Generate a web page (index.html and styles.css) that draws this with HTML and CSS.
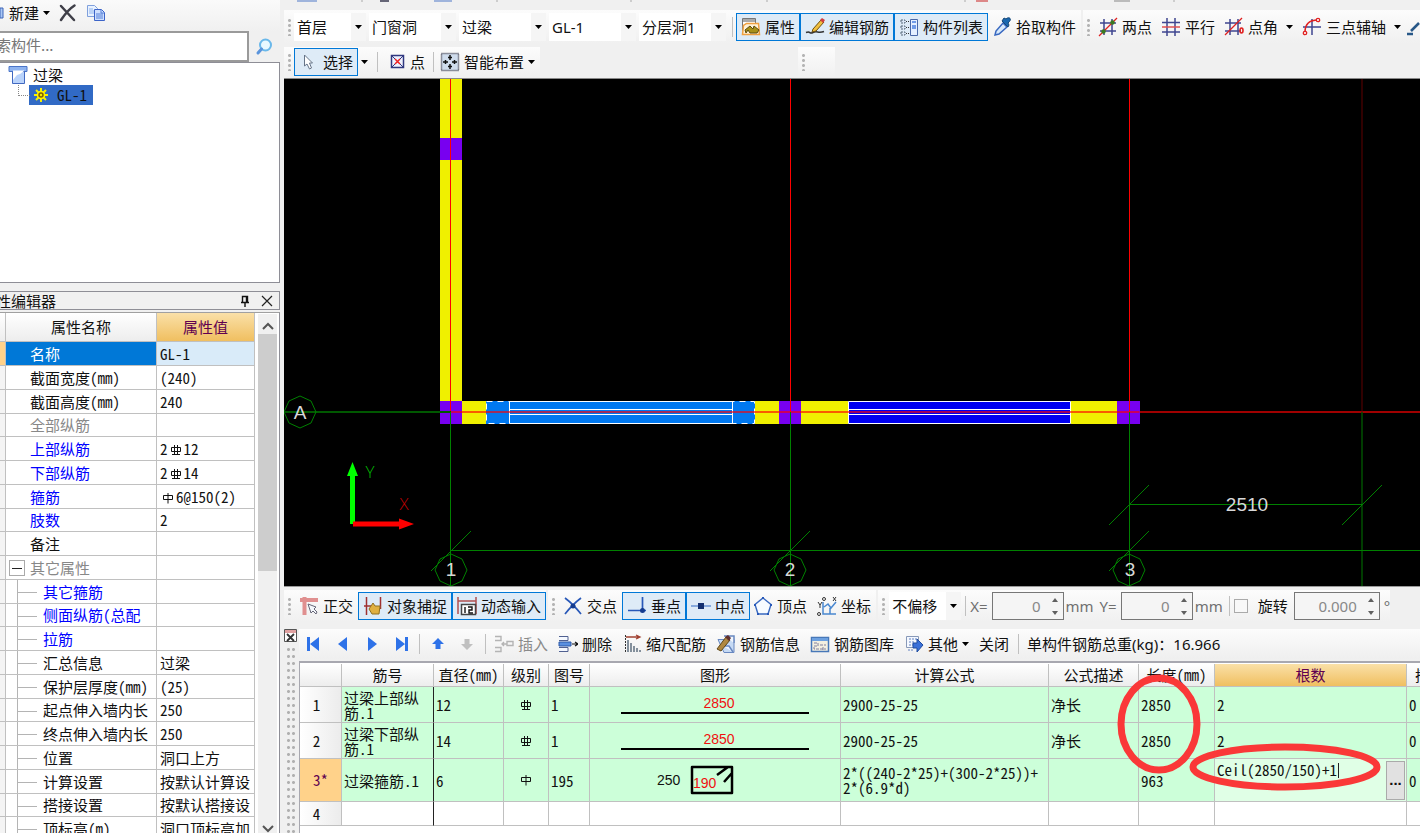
FILE: index.html
```html
<!DOCTYPE html>
<html lang="zh-CN">
<head>
<meta charset="utf-8">
<title>过梁 GL-1</title>
<link rel="stylesheet" href="styles.css">
</head>
<body>
<svg class="defs" aria-hidden="true">
  <symbol id="caret" viewBox="0 0 7 4"><path d="M0 0h7L3.500 4z"/></symbol>
  <symbol id="rebar3" viewBox="0 0 12 12"><path d="M1.500 3.500h9v4h-9zM4.500 1v10M7.500 1v10M2 10.500h8" fill="none" stroke="#111"/></symbol>
  <symbol id="rebar1" viewBox="0 0 12 12"><path d="M1.500 3.500h9v4h-9zM6 1v10.500" fill="none" stroke="#111"/></symbol>
  <symbol id="spin" viewBox="0 0 8 20"><path d="M1 6l3-4 3 4zM1 15l3 4 3-4z" fill="#606060"/></symbol>
</svg>

<aside class="side">
  <div class="side-tools">
    <svg class="frag" viewBox="0 0 4 12"><path d="M0 1h3v10H0z" fill="#a9c7f5" stroke="#3c64b8"/></svg>
    <button class="plain">新建<svg class="caret"><use href="#caret"/></svg></button>
    <button class="plain" aria-label="删除构件"><svg class="ico" viewBox="0 0 20 20"><path d="M3 3l13 14M16.500 2.500C11 6 7 11 3 17" fill="none" stroke="#3f3f48" stroke-width="2.500" stroke-linecap="round"/></svg></button>
    <button class="plain" aria-label="复制"><svg class="ico" viewBox="0 0 20 20"><path d="M1.500 2.500h7l3 3v8h-10z" fill="#e9f2ff" stroke="#7fa0dc"/><path d="M3 6h4M3 8h5M3 10h5" stroke="#8db3ee"/><path d="M8.500 6.500h7l3 3v8h-10z" fill="#cfe0ff" stroke="#3c64c8"/><path d="M15 7v3h3M10 11h7M10 13h7M10 15h7" fill="none" stroke="#5580d8"/></svg></button>
  </div>
  <div class="search">
    <input type="text" value="索构件..." aria-label="搜索构件">
    <button aria-label="搜索"><svg class="ico" viewBox="0 0 20 20"><circle cx="11.500" cy="8" r="5.500" fill="#e8f8ff" stroke="#6ab8ea" stroke-width="2"/><path d="M7.500 12L4 16" stroke="#5a94dc" stroke-width="3" stroke-linecap="round"/></svg></button>
  </div>
  <ul class="tree">
    <li><svg class="ico" viewBox="0 0 20 20"><path d="M1 1.500h18v5H1z" fill="#8fb4f0" stroke="#4a74c8"/><path d="M4.500 6.500h12v12h-12z" fill="#b9d3fb" stroke="#4068c0"/><path d="M5 15l4-5 3-1 4-3v-0.500H5z" fill="#fff"/></svg>过梁
      <ul><li><span class="picked"><svg class="sun" viewBox="0 0 14 14"><g stroke="#f4f000" stroke-width="2"><path d="M7 0v14M0 7h14M2 2l10 10M12 2L2 12"/></g><circle cx="7" cy="7" r="3.500" fill="#806000" stroke="#fff400" stroke-width="1.500"/><circle cx="7" cy="7" r="1.200" fill="#f4f000"/></svg><span class="mono">GL-1</span></span></li></ul>
    </li>
  </ul>
  <div class="title"><h2>性编辑器</h2>
    <button aria-label="固定"><svg viewBox="0 0 14 14"><path d="M3 8.500h8M4.500 8V2.500h5V8M8.500 2v6M7 9v4" fill="none" stroke="#111" stroke-width="1.400"/></svg></button>
    <button aria-label="关闭"><svg viewBox="0 0 14 14"><path d="M2 2l10 10M12 2L2 12" stroke="#222" stroke-width="1.200"/></svg></button>
  </div>
  <div class="props">
    <table>
      <colgroup><col class="p0"><col class="p1"><col class="p2"></colgroup>
      <thead><tr><th></th><th>属性名称</th><th class="hot">属性值</th></tr></thead>
      <tbody>
        <tr class="current"><td></td><td>名称</td><td><span class="mono">GL-1</span></td></tr>
        <tr><td></td><td>截面宽度<span class="mono">(mm)</span></td><td><span class="mono">(240)</span></td></tr>
        <tr><td></td><td>截面高度<span class="mono">(mm)</span></td><td><span class="mono">240</span></td></tr>
        <tr class="dim"><td></td><td>全部纵筋</td><td></td></tr>
        <tr class="link"><td></td><td>上部纵筋</td><td><span class="mono">2<svg class="bar"><use href="#rebar3"/></svg>12</span></td></tr>
        <tr class="link"><td></td><td>下部纵筋</td><td><span class="mono">2<svg class="bar"><use href="#rebar3"/></svg>14</span></td></tr>
        <tr class="link"><td></td><td>箍筋</td><td><span class="mono"><svg class="bar"><use href="#rebar1"/></svg>6@150(2)</span></td></tr>
        <tr class="link"><td></td><td>肢数</td><td><span class="mono">2</span></td></tr>
        <tr><td></td><td>备注</td><td></td></tr>
        <tr class="dim group"><td></td><td><button class="fold" aria-label="折叠"></button>其它属性</td><td></td></tr>
        <tr class="kid link"><td></td><td>其它箍筋</td><td></td></tr>
        <tr class="kid link"><td></td><td>侧面纵筋<span class="mono">(</span>总配</td><td></td></tr>
        <tr class="kid link"><td></td><td>拉筋</td><td></td></tr>
        <tr class="kid"><td></td><td>汇总信息</td><td>过梁</td></tr>
        <tr class="kid"><td></td><td>保护层厚度<span class="mono">(mm)</span></td><td><span class="mono">(25)</span></td></tr>
        <tr class="kid"><td></td><td>起点伸入墙内长</td><td><span class="mono">250</span></td></tr>
        <tr class="kid"><td></td><td>终点伸入墙内长</td><td><span class="mono">250</span></td></tr>
        <tr class="kid"><td></td><td>位置</td><td>洞口上方</td></tr>
        <tr class="kid"><td></td><td>计算设置</td><td>按默认计算设</td></tr>
        <tr class="kid"><td></td><td>搭接设置</td><td>按默认搭接设</td></tr>
        <tr class="kid last"><td></td><td>顶标高<span class="mono">(m)</span></td><td>洞口顶标高加</td></tr>
      </tbody>
    </table>
    <div class="scroll"><svg viewBox="0 0 12 8"><path d="M1 7l5-5 5 5" fill="none" stroke="#555" stroke-width="2"/></svg><i></i><svg viewBox="0 0 12 8"><path d="M1 1l5 5 5-5" fill="none" stroke="#555" stroke-width="2"/></svg></div>
  </div>
</aside>

<main class="work">
  <svg class="sliver" viewBox="0 0 1136 3" preserveAspectRatio="xMinYMin slice"><path d="M13 1h20M150 1h18" stroke="#9fb4dc" stroke-width="2"/><path d="M96 1h9" stroke="#667" stroke-width="2"/><path d="M692 1h12" stroke="#d88" stroke-width="2"/><path d="M78 0v2M213 0v2M347 0v2M483 0v2M681 0v2M890 0v2" stroke="#aaa"/><path d="M830 1h16" stroke="#bbb" stroke-width="2"/></svg>

  <div class="bars bars-top">
    <div class="bar-strip">
      <i class="grip"></i>
      <span class="combo w72"><select aria-label="楼层"><option>首层</option></select><svg class="caret"><use href="#caret"/></svg></span>
      <span class="combo w87"><select aria-label="构件类别"><option>门窗洞</option></select><svg class="caret"><use href="#caret"/></svg></span>
      <span class="combo w87"><select aria-label="构件类型"><option>过梁</option></select><svg class="caret"><use href="#caret"/></svg></span>
      <span class="combo w87"><select aria-label="构件"><option>GL-1</option></select><svg class="caret"><use href="#caret"/></svg></span>
      <span class="combo w87"><select aria-label="分层"><option>分层洞1</option></select><svg class="caret"><use href="#caret"/></svg></span>
      <i class="sep"></i>
      <div class="joined">
        <button class="tool on"><svg class="ico" viewBox="0 0 20 20"><path d="M1.500 1.500h13v12h-13z" fill="#fff" stroke="#777"/><path d="M2 2h12v3H2z" fill="#aaa"/><path d="M5.500 6.500h12l1 11h-17l1-9z" fill="#fff2d8" stroke="#f0a040" stroke-width="1.500"/><path d="M4 13l5-4 3 3 1-3 5 4-2 3H9l-2-3-2 3z" fill="#a89018" stroke="#5c4c10"/></svg>属性</button>
        <button class="tool on"><svg class="ico" viewBox="0 0 20 20"><path d="M1 15.500c5-2 3 2 7 0s5 1 11-1" fill="none" stroke="#333" stroke-width="1.500"/><path d="M8 12l8-9 3 2-8 9-4 1z" fill="#f0c040" stroke="#70500c"/><path d="M15 3l2-2 3 2-2 3z" fill="#d04040"/></svg>编辑钢筋</button>
        <button class="tool on"><svg class="ico" viewBox="0 0 20 20"><path d="M2 3h4v3H2zM2 9h4v3H2zM2 15h4v3H2z" fill="#dce8f8" stroke="#567" stroke-dasharray="2 1"/><path d="M7 4.500h3M7 10.500h3M7 16.500h3" stroke="#333" stroke-dasharray="1 1"/><path d="M11.500 2.500h7v16h-7z" fill="#e4efff" stroke="#4a68a8"/><path d="M13 5h4M13 9h4M13 11h4" stroke="#4a80e0" stroke-width="1.500"/></svg>构件列表</button>
      </div>
      <button class="tool"><svg class="ico" viewBox="0 0 20 20"><path d="M3 18l1-4 7-8 4 4-8 7z" fill="#d7e9fb" stroke="#3868c0" stroke-width="1.500"/><path d="M10 4l6 6 1-2-1-2c5-4 1-7-2-4l-2-1z" fill="#1b68b0" stroke="#164878"/></svg>拾取构件</button>
    </div>
    <div class="bar-strip grow">
      <i class="grip"></i>
      <button class="tool"><svg class="ico" viewBox="0 0 20 20"><path d="M6 2v16M14 2v16M2 6h16M2 14h16" stroke="#3f4690" stroke-width="1.500"/><path d="M1 19L19 1" stroke="#e02020" stroke-width="1.300"/><circle cx="14.500" cy="5.500" r="2.200" fill="#3b7a20"/><circle cx="5.500" cy="14.500" r="2.200" fill="#3b7a20"/></svg>两点</button>
      <button class="tool"><svg class="ico" viewBox="0 0 20 20"><path d="M6 1v18M14 1v18M1 5.500h18M1 15h18" stroke="#3f4690" stroke-width="1.500"/><path d="M1 10h18" stroke="#e05050" stroke-width="1.500"/></svg>平行</button>
      <button class="tool drop"><svg class="ico" viewBox="0 0 20 20"><path d="M6 2v16M14 2v16M1 6h16M1 14h16" stroke="#3f4690" stroke-width="1.500"/><path d="M1 18L18 1" stroke="#e02020" stroke-width="1.300"/><ellipse cx="17.500" cy="13.500" rx="1.500" ry="2.500" fill="none" stroke="#e02020" stroke-width="1.600"/></svg>点角<svg class="caret"><use href="#caret"/></svg></button>
      <button class="tool drop"><svg class="ico" viewBox="0 0 20 20"><path d="M10 2v16M1 10h18" stroke="#3f4690" stroke-width="1.500"/><path d="M3 15Q3 3 16 3" fill="none" stroke="#e02020" stroke-width="1.500"/><circle cx="3" cy="16" r="1.700" fill="#fff" stroke="#e02020" stroke-width="1.300"/><circle cx="16" cy="3" r="1.700" fill="#fff" stroke="#e02020" stroke-width="1.300"/></svg>三点辅轴<svg class="caret"><use href="#caret"/></svg></button>
      <svg class="ico" viewBox="0 0 20 20"><path d="M2 17h6M6 14l8-8" stroke="#285888" stroke-width="2.500"/></svg>
    </div>
  </div>

  <div class="bars bars-mid">
    <div class="bar-strip">
      <i class="grip"></i>
      <button class="tool on"><svg class="ico" viewBox="0 0 20 20"><path d="M5.500 3v11l2.500-2 2.500 5 2-1-2-5h3z" fill="#fff" stroke="#667488"/></svg>选择</button>
      <button class="plain" aria-label="选择方式"><svg class="caret"><use href="#caret"/></svg></button>
      <i class="sep wide"></i>
      <button class="tool"><svg class="ico16" viewBox="0 0 16 16"><path d="M1.500 1.500h12v12h-12z" fill="#eef2ff" stroke="#303880" stroke-width="1.500"/><path d="M2 2l11 11M13 2L2 13" stroke="#303880"/><path d="M5 5l5 5M10 5l-5 5" stroke="#f02020" stroke-width="1.500"/></svg>点</button>
      <i class="sep slim"></i>
      <button class="tool drop"><svg class="ico" viewBox="0 0 20 20"><path d="M1.500 1.500h17v17h-17z" fill="#cfdcec" stroke="#334" stroke-width="1.500" stroke-dasharray="1 1"/><path d="M10 3v5M8 5.500h4M10 12v5M8 14.500h4M3 10h5M5.500 8v4M12 10h5M14.500 8v4" stroke="#111" stroke-width="1.500"/></svg>智能布置<svg class="caret"><use href="#caret"/></svg></button>
    </div>
    <div class="bar-strip stub"><i class="grip"></i></div>
  </div>

  <div class="canvas">
    <svg viewBox="284 79 1136 507" preserveAspectRatio="xMinYMin slice">
      <path d="M440 79h22v322h-22zM440 401h677v23H440z" fill="#f0f000"/>
      <path d="M440 138h22v22h-22zM440 401h22v23h-22zM779 401h22v23h-22zM1117 401h23v23h-23z" fill="#7800f0"/>
      <path d="M486 401h269v23H486z" fill="#0078f0"/>
      <path d="M486.500 401.500h268v22h-268z" fill="none" stroke="#fff" stroke-dasharray="6 5"/>
      <path d="M848 401h223v23H848z" fill="#0000f0"/>
      <path d="M509.500 401.500h223v22h-223zM509 409.500h224M509 414.500h224M848.500 401.500h222v22h-222zM848.500 409.500h222M848.500 414.500h222" fill="none" stroke="#fff"/>
      <path d="M450.500 412h689" stroke="#f00" stroke-opacity=".62" stroke-width="2"/>
      <path d="M1140 412h600" stroke="#a00000" stroke-width="2"/>
      <path d="M450.500 79v333M790.500 79v333M1129.500 79v333" stroke="#f00"/>
      <path d="M1362 79v333" stroke="#600000"/>
      <path d="M285 412h166" stroke="#005800" stroke-width="2"/>
      <path d="M1362 412v174" stroke="#005000" stroke-width="1.500"/>
      <g stroke="#008000" fill="none">
        <path d="M450.500 412v174M790.500 412v174M1129.500 412v174M450 550.500h1290M1129 504.500h233"/>
        <path d="M431 571l40-40M770 571l40-40M1109 571l40-40M1109 525l40-40M1342 525l40-40"/>
        <path id="ring" d="M300 396l11 5 5 11-5 11-11 5-11-5-5-11 5-11z"/>
        <use href="#ring" x="151" y="158"/><use href="#ring" x="490" y="158"/><use href="#ring" x="829" y="158"/>
      </g>
      <g class="axis-text"><text x="300" y="419">A</text><text x="451" y="576">1</text><text x="790" y="576">2</text><text x="1130" y="576">3</text><text x="1247" y="511">2510</text></g>
      <path d="M350 524v-48h-3l5.500-14 5.500 14h-3v48z" fill="#0f0"/>
      <path d="M353 521.500h46v-3l15 5.500-15 5.500v-3h-46z" fill="#f00"/>
      <text class="ucs" x="370" y="478" fill="#00b800">Y</text><text class="ucs" x="404" y="510" fill="#c00000">X</text>
    </svg>
  </div>

  <div class="bars bars-snap">
    <div class="bar-strip">
      <i class="grip"></i>
      <button class="tool"><svg class="ico" viewBox="0 0 20 20"><path d="M1 4h18M5.500 1v18" stroke="#e09090" stroke-width="4"/><path d="M9 8l3 9 2-2 3 3 1-2-3-3 2-2z" fill="#f4f8fc" stroke="#667"/></svg>正交</button>
      <div class="joined">
        <button class="tool on"><svg class="ico" viewBox="0 0 20 20"><path d="M3.500 1v18M17.500 1v12M1 10h7" stroke="#a03030" stroke-width="1.500"/><path d="M8 10l2-3 2 3 5 0-1 8H9l-3-5z" fill="#e0b040" stroke="#907020"/></svg>对象捕捉</button>
        <button class="tool on"><svg class="ico" viewBox="0 0 20 20"><path d="M1 1v17M19 1v17M1 5h18" fill="none" stroke="#b05050" stroke-width="1.500"/><path d="M4.500 8.500h14v10h-14z" fill="#fff" stroke="#444" stroke-width="1.500"/><path d="M8 11v6M11 11h4v3h-3v3h4" fill="none" stroke="#111" stroke-width="1.400"/></svg>动态输入</button>
      </div>
    </div>
    <div class="bar-strip">
      <i class="grip"></i>
      <button class="tool"><svg class="ico" viewBox="0 0 20 20"><path d="M2 2q8 6 16 16M18 2Q10 8 2 18" fill="none" stroke="#2858b8" stroke-width="1.700"/><circle cx="10" cy="10" r="2.500" fill="#143c90"/></svg>交点</button>
      <div class="joined">
        <button class="tool on"><svg class="ico" viewBox="0 0 20 20"><path d="M15.500 1v13M1 14.500h18" stroke="#2858b8" stroke-width="1.700"/><circle cx="15.500" cy="14.500" r="2.500" fill="#143c90"/></svg>垂点</button>
        <button class="tool on"><svg class="ico" viewBox="0 0 20 20"><path d="M0 10h20" stroke="#6a94d4" stroke-width="1.500"/><path d="M7 7h6v6H7z" fill="#143070"/></svg>中点</button>
      </div>
      <button class="tool"><svg class="ico" viewBox="0 0 20 20"><path d="M10 2l8 6.500-3 9.500H5L2 8.500z" fill="#f7fbff" stroke="#3868c0" stroke-width="1.400"/><path d="M9 1h2v2H9zM17 8h2v2h-2zM14 17h2v2h-2zM4 17h2v2H4zM1 8h2v2H1z" fill="#2858b8"/></svg>顶点</button>
      <button class="tool"><svg class="ico" viewBox="0 0 20 20"><path d="M6 6v12h13M7 11l4-3 3 4 5-6M13 12v6" fill="none" stroke="#4a88d0" stroke-width="1.500"/><path d="M1 6l2 3 2-3M3 9v3M16 1l3 4M19 1l-3 4" fill="none" stroke="#333"/><circle cx="7" cy="3" r="1.500" fill="none" stroke="#333"/><circle cx="2" cy="18" r="1.500" fill="none" stroke="#333"/></svg>坐标</button>
    </div>
    <div class="bar-strip offset">
      <i class="grip"></i>
      <span class="combo w72"><select aria-label="偏移方式"><option>不偏移</option></select><svg class="caret"><use href="#caret"/></svg></span>
      <i class="sep"></i>
      <label for="ox">X=</label><span class="spin"><input id="ox" type="text" value="0" disabled><svg><use href="#spin"/></svg></span><span class="unit">mm</span>
      <label for="oy">Y=</label><span class="spin"><input id="oy" type="text" value="0" disabled><svg><use href="#spin"/></svg></span><span class="unit">mm</span>
      <i class="sep"></i>
      <input id="rot" class="tick" type="checkbox"><label for="rot" class="dark">旋转</label>
      <span class="spin big"><input type="text" aria-label="旋转角度" value="0.000" disabled><svg><use href="#spin"/></svg></span><span>°</span>
    </div>
  </div>

  <section class="dock">
    <div class="dock-edge"><button aria-label="关闭面板"><svg viewBox="0 0 13 13"><path d="M.500.500h12v12H.500z" fill="#fff" stroke="#555"/><path d="M1 1h11v3H1z" fill="#e0a0a0"/><path d="M3 5l7 7M10 5l-7 7" stroke="#333" stroke-width="1.800"/></svg></button><i></i></div>
    <div class="dock-main">
      <div class="dock-tools">
        <button class="nav" aria-label="首条"><svg viewBox="0 0 16 16"><path d="M1 1h3v14H1zM13 1v14L4 8z" fill="#2e72e8"/></svg></button>
        <button class="nav" aria-label="上一条"><svg viewBox="0 0 16 16"><path d="M12 1v14L3 8z" fill="#2e72e8"/></svg></button>
        <button class="nav" aria-label="下一条"><svg viewBox="0 0 16 16"><path d="M4 1v14l9-7z" fill="#2e72e8"/></svg></button>
        <button class="nav" aria-label="末条"><svg viewBox="0 0 16 16"><path d="M12 1h3v14h-3zM3 1v14l9-7z" fill="#2e72e8"/></svg></button>
        <i class="sep"></i>
        <button class="nav" aria-label="上移"><svg viewBox="0 0 16 16"><path d="M8 2l6 6h-3.500v5h-5V8H2z" fill="#2e72e8"/></svg></button>
        <button class="nav" aria-label="下移"><svg viewBox="0 0 16 16"><path d="M8 14l6-6h-3.500V3h-5v5H2z" fill="#c0c0c0"/></svg></button>
        <i class="sep"></i>
        <button class="tool off"><svg class="ico" viewBox="0 0 20 20"><path d="M1 2.500h6v4H1M1 13.500h6v4H1M8 10h5M10 8l-2 2 2 2M13 7.500h6v4h-6z" fill="none" stroke="#b4b4b4" stroke-width="1.400"/></svg>插入</button>
        <button class="tool"><svg class="ico" viewBox="0 0 20 20"><path d="M1 2.500h9v4H1M1 13.500h9v4H1" fill="#f4f8ff" stroke="#506090"/><path d="M1 8h12v4H1z" fill="#5a90e0" stroke="#2c58a8"/><path d="M14 10h6M17 8l3 2-3 2" fill="none" stroke="#111" stroke-width="1.200"/></svg>删除</button>
        <button class="tool"><svg class="ico" viewBox="0 0 20 20"><path d="M3.500 1v18" stroke="#333" stroke-dasharray="2 1"/><path d="M4 3h13M14 1l4 2-4 2" fill="none" stroke="#a04030" stroke-width="1.300"/><path d="M6 6v12M9 9v9M12 12v6M15 14v4M18 16v2" stroke="#567" stroke-width="1.400"/></svg>缩尺配筋</button>
        <button class="tool"><svg class="ico" viewBox="0 0 20 20"><path d="M2 5.500h16v13H8z" fill="#c6daf4" stroke="#6888c0"/><path d="M8 2h10v7M7 12h6l4 6" fill="#f0f6ff" stroke="#6888c0" stroke-width="1.500"/><path d="M1 15L10 3l4 3L5 17z" fill="#b08840" stroke="#604818"/><path d="M9 3l3-2 3 3-2 3z" fill="#603030"/></svg>钢筋信息</button>
        <button class="tool"><svg class="ico" viewBox="0 0 20 20"><path d="M1.500 3.500h17v14h-17z" fill="#f3efe0" stroke="#4878b8" stroke-width="1.500"/><path d="M2 4h16v3H2z" fill="#6ca0e0"/><path d="M4 9h4v3H4v3h12M10 11h6M13 13v3" fill="none" stroke="#8080a0" stroke-dasharray="3 1"/></svg>钢筋图库</button>
        <button class="tool drop"><svg class="ico" viewBox="0 0 20 20"><path d="M2.500 2.500h12v11h-12z" fill="#f4f8ff" stroke="#8899b8"/><path d="M5 5h8M5 8h6M5 11h6M4 16h6" stroke="#6080c0" stroke-dasharray="2 1"/><path d="M9 9h4V5l6 6-6 7v-4H9z" fill="#3a70d8" stroke="#1f4ca0"/></svg>其他<svg class="caret"><use href="#caret"/></svg></button>
        <button class="tool">关闭</button>
        <i class="sep"></i>
        <span class="total">单构件钢筋总重(kg)：16.966</span>
      </div>
      <div class="sheet">
        <table>
          <colgroup><col class="c0"><col class="c1"><col class="c2"><col class="c3"><col class="c4"><col class="c5"><col class="c6"><col class="c7"><col class="c8"><col class="c9"><col class="c10"></colgroup>
          <thead><tr><th></th><th>筋号</th><th>直径<span class="mono">(mm)</span></th><th>级别</th><th>图号</th><th>图形</th><th>计算公式</th><th>公式描述</th><th>长度<span class="mono">(mm)</span></th><th class="hot">根数</th><th class="cut">搭接</th></tr></thead>
          <tbody>
            <tr class="r-mid"><th class="mono">1</th><td class="wrap">过梁上部纵筋<span class="mono">.1</span></td><td class="mono">12</td><td class="mid"><svg class="bar"><use href="#rebar3"/></svg></td><td class="mono">1</td><td class="mid"><span class="rod">2850</span></td><td class="mono">2900-25-25</td><td>净长</td><td class="mono">2850</td><td class="mono">2</td><td class="mono">0</td></tr>
            <tr class="r-mid"><th class="mono">2</th><td class="wrap">过梁下部纵筋<span class="mono">.1</span></td><td class="mono">14</td><td class="mid"><svg class="bar"><use href="#rebar3"/></svg></td><td class="mono">1</td><td class="mid"><span class="rod">2850</span></td><td class="mono">2900-25-25</td><td>净长</td><td class="mono">2850</td><td class="mono">2</td><td class="mono">0</td></tr>
            <tr class="r-tall"><th class="mono now">3*</th><td>过梁箍筋<span class="mono">.1</span></td><td class="mono">6</td><td class="mid"><svg class="bar"><use href="#rebar1"/></svg></td><td class="mono">195</td><td><span class="hoop">250<svg viewBox="0 0 44 30"><path d="M2 2h40v26H2zM27 10l11-8M34 17l8-9" fill="none" stroke="#000" stroke-width="2.500" stroke-linejoin="round"/><text x="3" y="23">190</text></svg></span></td><td class="mono wrap">2*((240-2*25)+(300-2*25))+<br>2*(6.9*d)</td><td></td><td class="mono">963</td><td class="edit"><div><input class="mono" type="text" value="Ceil(2850/150)+1" aria-label="根数"><i></i><button aria-label="更多">...</button></div></td><td class="mono">0</td></tr>
            <tr class="r-new"><th class="mono">4</th><td></td><td></td><td></td><td></td><td></td><td></td><td></td><td></td><td></td><td></td></tr>
          </tbody>
        </table>
        <svg class="marks" viewBox="0 0 1120 170"><ellipse cx="859" cy="61" rx="38" ry="46"/><ellipse cx="985" cy="104" rx="92" ry="20"/></svg>
      </div>
    </div>
  </section>
</main>
</body>
</html>
```
FILE: styles.css
```css
* { box-sizing: border-box; }

body {
  margin: 0;
  height: 100vh;
  display: flex;
  overflow: hidden;
  background: #f0f0f0;
  color: #111;
  font: 15px/20px "Noto Sans", "Noto Sans CJK SC", sans-serif;
}

button, input, select { font: inherit; color: inherit; }
button { background: none; border: 0; padding: 0; }
i { flex: none; }
svg { flex: none; }
.defs { position: absolute; width: 0; height: 0; }

/* Half-width forms: two Latin characters per ideograph */
.mono { font-family: "Noto Sans CJK SC", monospace; font-feature-settings: "hwid"; }
.ico { width: 20px; height: 20px; }
.ico16 { width: 16px; height: 16px; }
.caret { width: 7px; height: 4px; fill: #000; }
.bar { width: 12px; height: 12px; margin: 0 2px; vertical-align: -1px; }
.plain { display: flex; align-items: center; gap: 4px; }

/* Left column */
.side {
  flex: none;
  width: 280px;
  display: flex;
  flex-direction: column;
  overflow: hidden;
  font-family: "Noto Sans CJK SC", sans-serif;
}
.side-tools {
  height: 31px;
  flex: none;
  display: flex;
  align-items: center;
  gap: 8px;
  padding-bottom: 5px;
  background: linear-gradient(#fafafa, #f0f0f0);
}
.side-tools .frag { width: 4px; height: 12px; margin-right: -3px; }
.search { display: flex; flex: none; height: 31px; padding-right: 1px; }
.search input {
  flex: 1;
  min-width: 0;
  margin-left: -4px;
  padding: 0 0 4px;
  border: 2px solid #9a9a9a;
  border-left: 0;
  background: #fff;
  color: #777;
}
.search button { width: 30px; display: grid; place-items: center; }

.tree {
  flex: none;
  height: 221px;
  margin: 0;
  padding: 2px 0 0 8px;
  list-style: none;
  background: #fff;
  border: 1px solid #8e8e96;
  border-left: 0;
}
.tree ul { list-style: none; margin: 0; padding: 0 0 0 21px; }
.tree > li > .ico { margin-right: 5px; vertical-align: -4px; }
.tree ul li { position: relative; }
.tree ul li::before {
  content: "";
  position: absolute;
  left: -11px;
  top: 0;
  width: 11px;
  height: 10px;
  border: dotted #888;
  border-width: 0 0 1px 1px;
}
.picked { display: inline-flex; align-items: center; gap: 9px; height: 20px; padding: 0 6px 0 5px; background: #316ac5; }
.sun { width: 14px; height: 14px; }

.title {
  flex: none;
  display: flex;
  align-items: center;
  gap: 8px;
  height: 19px;
  margin: 8px 0 2px;
  padding-right: 5px;
  border: 1px solid #8e8e96;
  border-left: 0;
}
.title h2 { flex: 1; margin: 0 0 0 -4px; font-size: 15px; font-weight: 400; line-height: 16px; }
.title svg { display: block; width: 14px; height: 14px; }

.props {
  flex: 1;
  min-height: 0;
  display: flex;
  overflow: hidden;
  background: #fff;
  border-top: 1px solid #a0a0a0;
  border-right: 1px solid #8e8e96;
}
table { table-layout: fixed; border-collapse: separate; border-spacing: 0; }
td, th { padding: 0; border: 0 solid #c0c0c0; border-width: 0 1px 1px 0; font-weight: 400; white-space: nowrap; overflow: hidden; }
thead th { background: linear-gradient(#fff, #ededed); }
th.hot { background: linear-gradient(#fae0a8, #f0bf60); color: #600050; }

.props table { width: 255px; flex: none; align-self: flex-start; }
.p0 { width: 6px; }
.p1 { width: 151px; }
.p2 { width: 98px; }
.props thead th { height: 29px; }
.props td { height: 24px; line-height: 20px; }
.props tbody tr:nth-child(4n) td { height: 23px; }
.props td:first-child { background: #f4f4f4; }
.props td:nth-child(2) { padding-left: 24px; position: relative; }
.props td:nth-child(3) { padding-left: 3px; }
.props .kid td:nth-child(2) { padding-left: 37px; }
.props .current td:first-child { background: #ffd28a; }
.props .current td:nth-child(2) { background: #0078d7; color: #fff; }
.props .current td:nth-child(3) { background: #d9ebf9; }
.dim td:nth-child(2) { color: #888; }
.link td:nth-child(2) { color: #00f; }
.kid td:nth-child(2)::before {
  content: "";
  position: absolute;
  left: 11px;
  top: 12px;
  width: 20px;
  border-top: 1px solid #b4b4b4;
}
.kid td:nth-child(2)::after {
  content: "";
  position: absolute;
  left: 11px;
  top: 0;
  height: 100%;
  border-left: 1px solid #b4b4b4;
}
.fold {
  position: absolute;
  left: 3px;
  top: 4px;
  width: 16px;
  height: 16px;
  border: 1px solid #aaa;
  background: linear-gradient(#222, #222) center / 10px 1px no-repeat #fff;
}
.scroll {
  flex: 1;
  display: flex;
  flex-direction: column;
  align-items: center;
  gap: 4px;
  margin: 1px 2px 0 3px;
  padding-top: 8px;
  background: #f0f0f0;
}
.scroll svg { width: 12px; height: 8px; }
.scroll i { width: 19px; height: 237px; background: #cdcdcd; }
.scroll svg:last-child { margin-top: auto; }

/* Right column */
.work { flex: 1; min-width: 0; display: flex; flex-direction: column; padding-left: 4px; }
.sliver { height: 3px; width: 100%; margin-bottom: 7px; }
.bars { flex: none; display: flex; gap: 2px; overflow: hidden; }
.bar-strip {
  flex: none;
  display: flex;
  align-items: center;
  gap: 3px;
  padding-left: 4px;
  background: linear-gradient(#fcfcfc, #f0f0f0);
}
.bar-strip.grow { flex: 1 0 auto; }
.grip {
  width: 3px;
  height: 18px;
  background: radial-gradient(circle, #b4b4b4 1px, transparent 2px) 0 0 / 3px 5px;
}
.sep { width: 1px; height: 20px; margin: 0 0 0 3px; background: #c0c0c0; }

.tool {
  display: flex;
  align-items: center;
  gap: 4px;
  height: 28px;
  padding: 0 4px;
  border: 1px solid transparent;
  white-space: nowrap;
}
.tool.on { background: #deebf7; border-color: #0078d7; }
.tool.off { color: #8a8a8a; }
.joined { display: flex; }
.bars-top .bar-strip > .tool + .tool,
.bars-top .tool + .ico,
.bars-top .joined + .tool { margin-left: -4px; }
.tool.drop .caret { margin-left: 4px; }

.combo { position: relative; display: flex; height: 28px; background: linear-gradient(90deg, #fff calc(100% - 15px), #f5f5f5 0); }
.combo select {
  appearance: none;
  width: 100%;
  height: 28px;
  padding: 0 16px 0 3px;
  border: 0;
  border-radius: 0;
  background: transparent;
}
.combo .caret { position: absolute; right: 4px; top: 12px; pointer-events: none; }
.w72 { width: 72px; }
.w87 { width: 87px; }

.bars-top { height: 33px; }
.bars-mid { height: 36px; padding: 4px 0 1px; border-bottom: 1px solid #888; }
.bars-mid .sep.wide { margin: 0 4px 0 6px; }
.bars-mid .sep.slim { margin: 0; }
.bars-mid .sep.slim + .tool { margin-left: -2px; }
.bars-mid .drop .caret { margin-left: 0; }
.stub { width: 37px; margin-left: 256px; }

.canvas { flex: 1; min-height: 0; background: #000; }
.canvas svg { display: block; width: 100%; height: 100%; }
.axis-text { font: 19px "Liberation Sans", sans-serif; fill: #d8d8d8; text-anchor: middle; }
.ucs { font: 300 17px "Open Sans", sans-serif; text-anchor: middle; }

.bars-snap { height: 39px; padding: 3px 0; border-top: 1px solid #999; gap: 2px; }
.bars-snap .tool + .joined { margin-left: -3px; }
.bars-snap .joined + .tool { margin-left: -5px; }
.bars-snap .bar-strip > .tool + .tool { margin-left: -3px; }
.offset { color: #707070; gap: 4px; }
.offset .combo, .offset .dark { color: #111; }
.offset .sep { margin: 0; }
.spin { position: relative; width: 72px; height: 28px; display: flex; }
.spin.big { width: 86px; }
.spin input {
  width: 100%;
  padding: 0 22px 0 0;
  border: 1px solid #777;
  background: #f5f5f5;
  color: #888;
  text-align: right;
}
.spin svg { position: absolute; right: 5px; top: 4px; width: 8px; height: 20px; }
.unit { margin: 0 2px 0 -2px; }
.tick { appearance: none; width: 14px; height: 14px; margin: 0; border: 1px solid #aaa; background: #f8f8f8; }
.tick + .dark { margin: 0 2px 0 6px; }

/* Rebar editor */
.dock { flex: none; display: flex; min-width: 0; }
.dock-edge { width: 15px; flex: none; display: flex; flex-direction: column; gap: 4px; padding-top: 4px; }
.dock-edge button, .dock-edge svg { display: block; width: 13px; height: 13px; }
.dock-edge i { flex: 1; margin-left: 2px; background: radial-gradient(circle, #b0b0b0 1px, transparent 2px) 0 0 / 5px 7px; width: 10px; }
.dock-main { flex: 1; min-width: 0; display: flex; flex-direction: column; }
.dock-tools {
  display: flex;
  align-items: center;
  height: 30px;
  margin: 4px 0 2px;
  background: linear-gradient(#fcfcfc, #efefef);
  overflow: hidden;
}
.nav { display: grid; place-items: center; width: 29px; height: 28px; }
.nav svg { width: 16px; height: 16px; }
.dock-tools .sep { margin: 0 3px 0 4px; }
.dock-tools .drop .caret { margin-left: 0; }
.total { margin-left: 5px; white-space: nowrap; }

.sheet {
  position: relative;
  height: 172px;
  padding-top: 1px;
  overflow: hidden;
  background: #fff;
  border: 0 solid #a8a8b0;
  border-width: 2px 0 0 1px;
  font-family: "Noto Sans CJK SC", sans-serif;
}
.sheet table { width: 1140px; }
.c0 { width: 42px; }
.c1 { width: 92px; }
.c2 { width: 70px; }
.c3 { width: 45px; }
.c4 { width: 41px; }
.c5 { width: 251px; }
.c6 { width: 208px; }
.c7 { width: 90px; }
.c8 { width: 76px; }
.c9 { width: 192px; }
.sheet thead th { height: 23px; line-height: 20px; }
.sheet thead .cut { text-align: left; padding-left: 8px; }
.sheet tbody th { background: linear-gradient(90deg, #fff, #ececec); padding-right: 8px; }
.sheet tbody th.now { background: #ffd28a; color: #600050; padding-right: 0; }
.sheet td { background: #ccffd9; padding: 0 0 0 2px; line-height: 15px; }
.sheet td:nth-child(2) { border-right-color: #222; }
.sheet td.mid { text-align: center; padding: 0; }
.sheet td.mid .bar { display: block; margin: 0 auto; }
.sheet td.wrap { white-space: normal; }
.r-mid > * { height: 36px; }
.r-tall > * { height: 43px; }
.r-new > * { height: 24px; }
.sheet .r-new td { background: #fff; }

.rod {
  display: block;
  width: 188px;
  margin: 0 auto;
  padding: 0 0 1px 8px;
  border-bottom: 2px solid #000;
  color: #f01010;
  font: 14px/16px "Liberation Sans", sans-serif;
}
.hoop { display: flex; align-items: center; gap: 10px; padding-left: 65px; font: 14px/16px "Liberation Sans", sans-serif; }
.hoop svg { width: 44px; height: 30px; }
.hoop text { font: 14px "Liberation Sans", sans-serif; fill: #f01010; }

.sheet td.edit { padding: 0; background: #e0ffe6; }
.edit div { display: flex; align-items: flex-start; padding: 1px 1px 1px 2px; }
.edit input { width: 121px; height: 18px; padding: 0; border: 0; background: none; outline: 0; }
.edit i { width: 1px; height: 15px; margin-top: 2px; background: #222; }
.edit button { width: 19px; height: 39px; margin-left: auto; border: 1px solid #aaa; background: #e1e1e1; font: 700 15px/20px "Liberation Sans", sans-serif; }

.marks { position: absolute; left: 0; top: 0; width: 1120px; height: 170px; overflow: visible; pointer-events: none; fill: none; stroke: #fa3838; stroke-width: 7; }
```
